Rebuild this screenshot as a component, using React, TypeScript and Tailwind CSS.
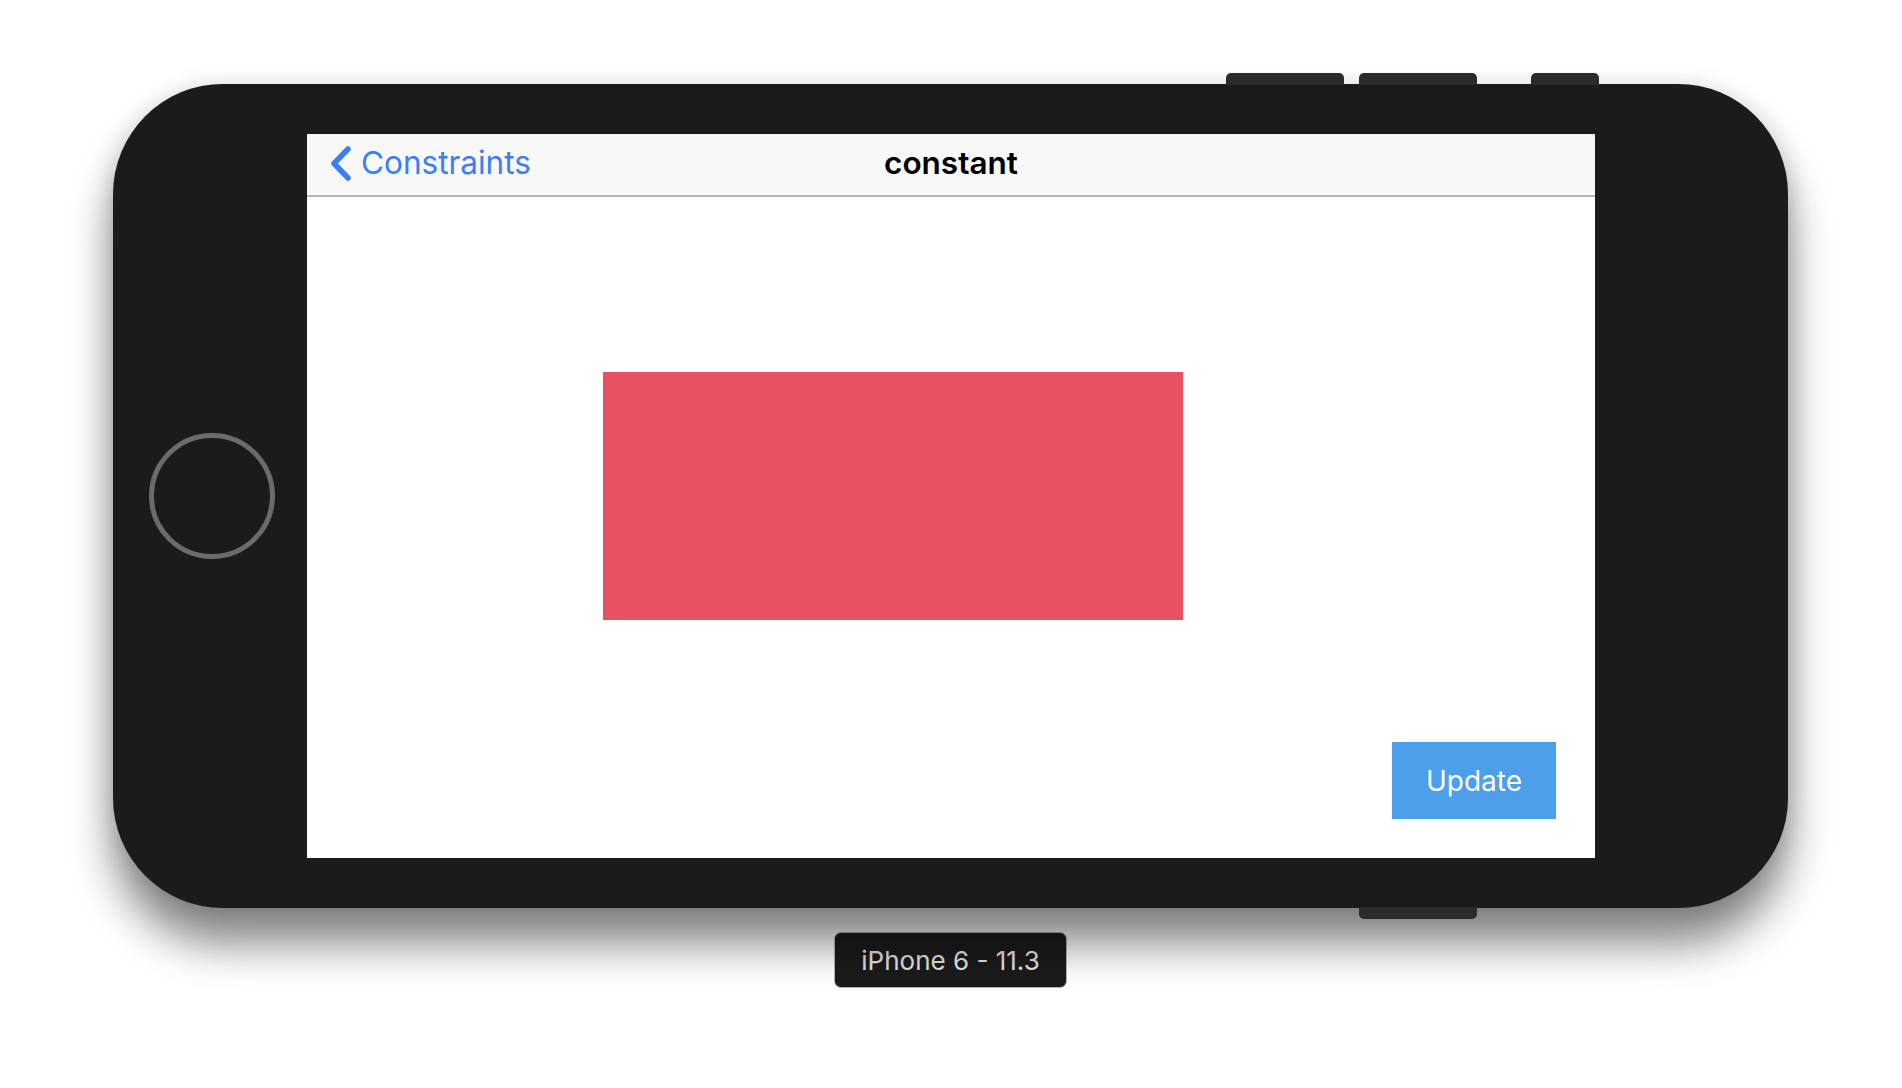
import { useState } from "react";

function BackChevron() {
  return (
    <svg width="24" height="35" viewBox="0 0 24 35" fill="none">
      <path d="M19 3 L5 17.5 L19 32" stroke="#3a7ff3" strokeWidth="5.5" strokeLinecap="round" strokeLinejoin="round" />
    </svg>
  );
}

export default function App() {
  const [clicks, setClicks] = useState(0);

  return (
    <div
      className="min-h-screen bg-white pl-[113px] pt-[84px]"
      style={{ fontFamily: "Inter, 'Noto Sans', 'Liberation Sans', sans-serif" }}
    >
      <div className="relative flex h-[824px] w-[1675px] rounded-[110px] bg-[#1b1b1b] shadow-[0_36px_44px_rgba(0,0,0,0.48),0_0_24px_rgba(0,0,0,0.12)]">
        {/* hardware buttons */}
        <div className="absolute left-[1113px] top-[-11px] h-[12px] w-[118px] rounded-t-[5px] bg-[#2b2b2b]" />
        <div className="absolute left-[1246px] top-[-11px] h-[12px] w-[118px] rounded-t-[5px] bg-[#2b2b2b]" />
        <div className="absolute left-[1418px] top-[-11px] h-[12px] w-[68px] rounded-t-[5px] bg-[#2b2b2b]" />
        <div className="absolute bottom-[-11px] left-[1246px] h-[12px] w-[118px] rounded-b-[5px] bg-[#2b2b2b]" />

        <div className="flex w-[194px] items-center justify-center">
          <div className="ml-[4px] h-[126px] w-[126px] rounded-full border-[5px] border-[#6b6b6b]" />
        </div>

        <div className="my-[50px] flex w-[1288px] flex-col bg-white">
          <div className="relative flex h-[63px] items-center border-b-2 border-[#b3b3b3] bg-[#f8f8f8] pb-[3px]">
            <div className="flex items-center gap-[8px] pl-[22px] text-[31.5px] text-[#3a7ff3]">
              <BackChevron />
              <span className="leading-none">Constraints</span>
            </div>
            <div className="absolute inset-x-0 text-center text-[31.5px] font-semibold leading-none text-black">constant</div>
          </div>

          <div className="flex flex-1 flex-col">
            <div className="ml-[296px] mt-[175px] h-[248px] w-[580px] bg-[#e75162]" />
            <button
              onClick={() => setClicks(clicks + 1)}
              className="mb-[39px] mr-[39px] mt-auto flex h-[77px] w-[164px] items-center justify-center self-end bg-[#4ca0ea] text-[28px] text-white"
            >
              Update
            </button>
          </div>
        </div>

        <div className="w-[193px]" />
      </div>

      <div className="ml-[721px] mt-[24px] flex h-[56px] w-[233px] items-center justify-center rounded-[7px] border border-[#b5b5b5] bg-[#1b1b1b] text-[26px] text-[#e4e4e4]">
        iPhone 6 - 11.3
      </div>
    </div>
  );
}
